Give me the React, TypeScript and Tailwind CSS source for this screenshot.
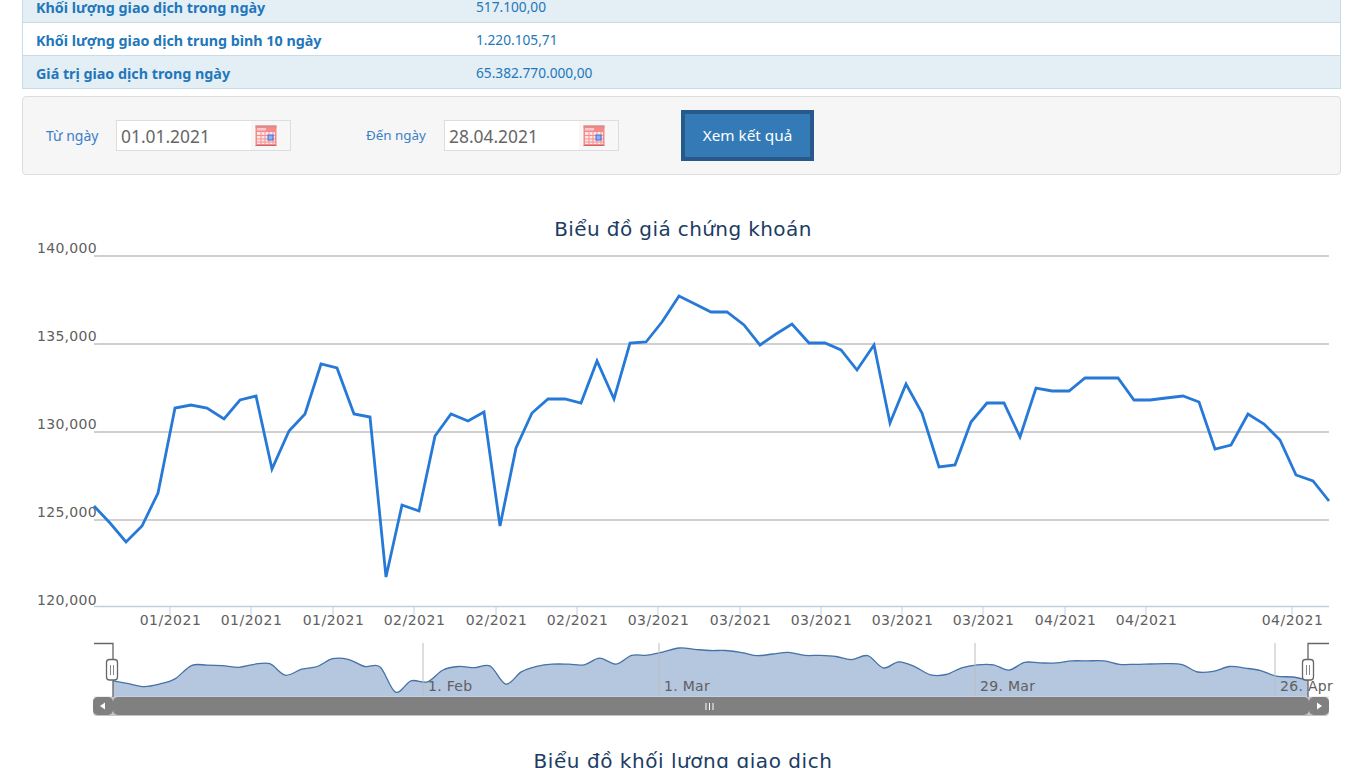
const priceData: [number, number][] = [
  [94, 506], [110, 523], [126, 542], [142, 526], [158, 493], [175, 408], [191, 405], [207, 408],
  [224, 419], [240, 400], [256, 396], [272, 469], [289, 431], [305, 414], [321, 364], [337, 368],
  [354, 414], [370, 417], [386, 577], [402, 505], [419, 511], [435, 436], [451, 414], [468, 421],
  [484, 412], [500, 526], [516, 448], [532, 413], [548, 399], [565, 399], [581, 403], [597, 361],
  [614, 399], [630, 343], [646, 342], [662, 322], [679, 296], [695, 304], [711, 312], [727, 312],
  [744, 325], [760, 345], [776, 334], [792, 324], [809, 343], [825, 343], [841, 350], [857, 370],
  [874, 345], [890, 423], [906, 384], [922, 413], [939, 467], [955, 465], [971, 422], [987, 403],
  [1004, 403], [1020, 437], [1036, 388], [1052, 391], [1069, 391], [1085, 378], [1101, 378], [1118, 378],
  [1134, 400], [1150, 400], [1166, 398], [1183, 396], [1199, 402], [1215, 449], [1231, 445], [1248, 414],
  [1264, 424], [1280, 440], [1296, 475], [1313, 481], [1329, 501],
];

// chart svg starts at y=210 on the page
const top = 210;
const pricePoints = priceData.map(([x, y]) => `${x},${y - top}`).join(' ');

const navPoints = priceData.map(([x, y]): [number, number] => [
  113 + ((x - 94) * 1195) / 1235,
  648 + (y - 296) * 0.157 - top,
]);

// catmull-rom through the points, the navigator line is a spline
function smooth(pts: [number, number][]) {
  let d = `M${pts[0][0]},${pts[0][1]}`;
  for (let i = 0; i < pts.length - 1; i++) {
    const p0 = pts[Math.max(i - 1, 0)];
    const p1 = pts[i];
    const p2 = pts[i + 1];
    const p3 = pts[Math.min(i + 2, pts.length - 1)];
    const c1x = p1[0] + (p2[0] - p0[0]) / 6;
    const c1y = p1[1] + (p2[1] - p0[1]) / 6;
    const c2x = p2[0] - (p3[0] - p1[0]) / 6;
    const c2y = p2[1] - (p3[1] - p1[1]) / 6;
    d += `C${c1x.toFixed(1)},${c1y.toFixed(1)} ${c2x.toFixed(1)},${c2y.toFixed(1)} ${p2[0].toFixed(1)},${p2[1].toFixed(1)}`;
  }
  return d;
}

const navLine = smooth(navPoints);
const navArea = `${navLine}L1308,${697 - top}L113,${697 - top}Z`;

const yAxis = [
  { label: '140,000', y: 256, text: 253 },
  { label: '135,000', y: 344, text: 341 },
  { label: '130,000', y: 432, text: 429 },
  { label: '125,000', y: 520, text: 517 },
];

const xTicks = [
  { x: 170, label: '01/2021' },
  { x: 251, label: '01/2021' },
  { x: 333, label: '01/2021' },
  { x: 414, label: '02/2021' },
  { x: 496, label: '02/2021' },
  { x: 577, label: '02/2021' },
  { x: 658, label: '03/2021' },
  { x: 740, label: '03/2021' },
  { x: 821, label: '03/2021' },
  { x: 902, label: '03/2021' },
  { x: 983, label: '03/2021' },
  { x: 1065, label: '04/2021' },
  { x: 1146, label: '04/2021' },
  { x: 1292, label: '04/2021' },
];

const navLabels = [
  { x: 423, label: '1. Feb' },
  { x: 659, label: '1. Mar' },
  { x: 975, label: '29. Mar' },
  { x: 1275, label: '26. Apr' },
];

const rows = [
  { name: 'Khối lượng giao dịch trong ngày', value: '517.100,00', alt: true },
  { name: 'Khối lượng giao dịch trung bình 10 ngày', value: '1.220.105,71', alt: false },
  { name: 'Giá trị giao dịch trong ngày', value: '65.382.770.000,00', alt: true },
];

function CalendarIcon() {
  return (
    <svg width="22" height="21" viewBox="0 0 22 21" className="shrink-0">
      <rect x="0.5" y="0.5" width="21" height="20" fill="#f58a8a" />
      <rect x="0.5" y="0.5" width="21" height="2" fill="#d98a8a" />
      <rect x="2" y="3" width="9" height="2.5" fill="#fbc9c9" />
      <rect x="2" y="7" width="18" height="12" fill="#ffe6e6" />
      <path d="M2 10.5h18M2 14h18M2 17h18M6 7v12M10 7v12M14 7v12M18 7v12" stroke="#f58f8f" strokeWidth="1" />
      <rect x="13" y="10" width="5" height="5" fill="#8fb0f2" stroke="#3b6fe0" strokeWidth="1" />
      <path d="M0.5 20.5h21" stroke="#c96a6a" />
    </svg>
  );
}

function DateField({ value }: { value: string }) {
  return (
    <div className="flex h-[31px] w-[175px] items-center justify-between border border-[#dddddd] bg-[#f7f7f7] pr-[13px]">
      <div className="flex h-full w-[134px] items-center bg-white pl-1 pt-[2px] text-[17.4px] text-[#666666]">{value}</div>
      <CalendarIcon />
    </div>
  );
}

function StockChart() {
  const label = { fontFamily: '"DejaVu Sans", sans-serif', fontSize: 14, letterSpacing: 0.3, fill: '#606060' };
  const tickLabel = { ...label, letterSpacing: 0.5 };
  return (
    <svg width="1366" height="520" viewBox="0 0 1366 520" className="block">
      {yAxis.map((t) => (
        <g key={t.label}>
          <line x1="94" x2="1329" y1={t.y - top} y2={t.y - top} stroke="#c0c0c0" strokeWidth="1.5" />
          <text x="37" y={t.text - top} style={label}>{t.label}</text>
        </g>
      ))}
      <text x="37" y={605 - top} style={label}>120,000</text>
      <line x1="94" x2="1329" y1={606.5 - top} y2={606.5 - top} stroke="#c0d0e0" strokeWidth="1.5" />
      {xTicks.map((t, i) => (
        <g key={i}>
          <line x1={t.x} x2={t.x} y1={607 - top} y2={615 - top} stroke="#c0d0e0" />
          <text x={t.x + 0.5} y={625 - top} textAnchor="middle" style={tickLabel}>{t.label}</text>
        </g>
      ))}
      <polyline points={pricePoints} fill="none" stroke="#2679d6" strokeWidth="2.8" strokeLinejoin="miter" />

      {/* navigator */}
      <path d={navArea} fill="#b5c6df" />
      <path d={navLine} fill="none" stroke="#4572a7" strokeWidth="1.3" />
      {navLabels.map((t) => (
        <g key={t.label}>
          <line x1={t.x} x2={t.x} y1={643 - top} y2={697 - top} stroke="#bcbcbc" />
          <text x={t.x + 5} y={691 - top} style={label}>{t.label}</text>
        </g>
      ))}
      <line x1="94" x2="1329" y1={697 - top} y2={697 - top} stroke="#d8dde4" />
      <path d={`M94 ${643.5 - top}H113V${697 - top}`} fill="none" stroke="#666666" strokeWidth="1.3" />
      <path d={`M1329 ${643.5 - top}H1308V${697 - top}`} fill="none" stroke="#666666" strokeWidth="1.3" />

      {/* handles */}
      {[112, 1308].map((x) => (
        <g key={x}>
          <rect x={x - 5.5} y={659.5 - top} width="11" height="20.5" rx="3" fill="#ffffff" stroke="#666666" strokeWidth="1.3" />
          <path d={`M${x - 1.5} ${665 - top}v10M${x + 1.5} ${665 - top}v10`} stroke="#888888" />
        </g>
      ))}

      {/* scrollbar */}
      <rect x="93" y={697 - top} width="1236" height="19" rx="4" fill="#c4c4c4" />
      <rect x="93" y={697 - top} width="20" height="18" rx="5" fill="#808080" />
      <rect x="113" y={697 - top} width="1196" height="18" rx="5" fill="#808080" />
      <rect x="1309" y={697 - top} width="20" height="18" rx="5" fill="#808080" />
      <path d={`M100 ${706 - top}l5 -3.5v7z`} fill="#ffffff" />
      <path d={`M1322 ${706 - top}l-5 -3.5v7z`} fill="#ffffff" />
      <path d={`M706 ${703 - top}v7M709.5 ${703 - top}v7M713 ${703 - top}v7`} stroke="#ffffff" />
    </svg>
  );
}

export default function App() {
  return (
    <div className="h-[768px] w-[1366px] overflow-hidden bg-white font-['Noto_Sans',sans-serif]">
      {/* table, top row is scrolled off */}
      <div className="ml-[22px] -mt-[10px] w-[1319px] border-x border-b border-[#c9dbe6]">
        {rows.map((r) => (
          <div
            key={r.name}
            className={`flex h-[33px] items-center border-b border-[#c9dbe6] pt-[3px] last:h-[32px] last:border-b-0 ${r.alt ? 'bg-[#e3eef5]' : 'bg-white'}`}
          >
            <div className="w-[453px] pl-[13px] text-[14.3px] font-bold text-[#2277bb]">{r.name}</div>
            <div className="text-[13.7px] text-[#2277bb]">{r.value}</div>
          </div>
        ))}
      </div>

      <div className="ml-[22px] mt-[7px] flex h-[79px] w-[1319px] items-center rounded border border-[#dddddd] bg-[#f6f6f6] pl-[23px] text-[#3a7fc9]">
        <span className="w-[70px] text-[14px]">Từ ngày</span>
        <DateField value="01.01.2021" />
        <span className="ml-[75px] w-[78px] text-[13.4px]">Đến ngày</span>
        <DateField value="28.04.2021" />
        <button className="ml-[62px] h-[51px] w-[133px] border-[4px] border-[#27598a] bg-[#337ab7] text-[15.3px] text-white">
          Xem kết quả
        </button>
      </div>

      <h2 className="mt-[39px] h-[34px] text-center font-['DejaVu_Sans',sans-serif] text-[20px] tracking-[0.4px] text-[#1c3c64]">
        Biểu đồ giá chứng khoán
      </h2>
      <div className="-mt-[38px]">
        <StockChart />
      </div>
      <h2 className="mt-[16px] text-center font-['DejaVu_Sans',sans-serif] text-[20px] tracking-[0.55px] text-[#1c3c64]">
        Biểu đồ khối lượng giao dịch
      </h2>
    </div>
  );
}
